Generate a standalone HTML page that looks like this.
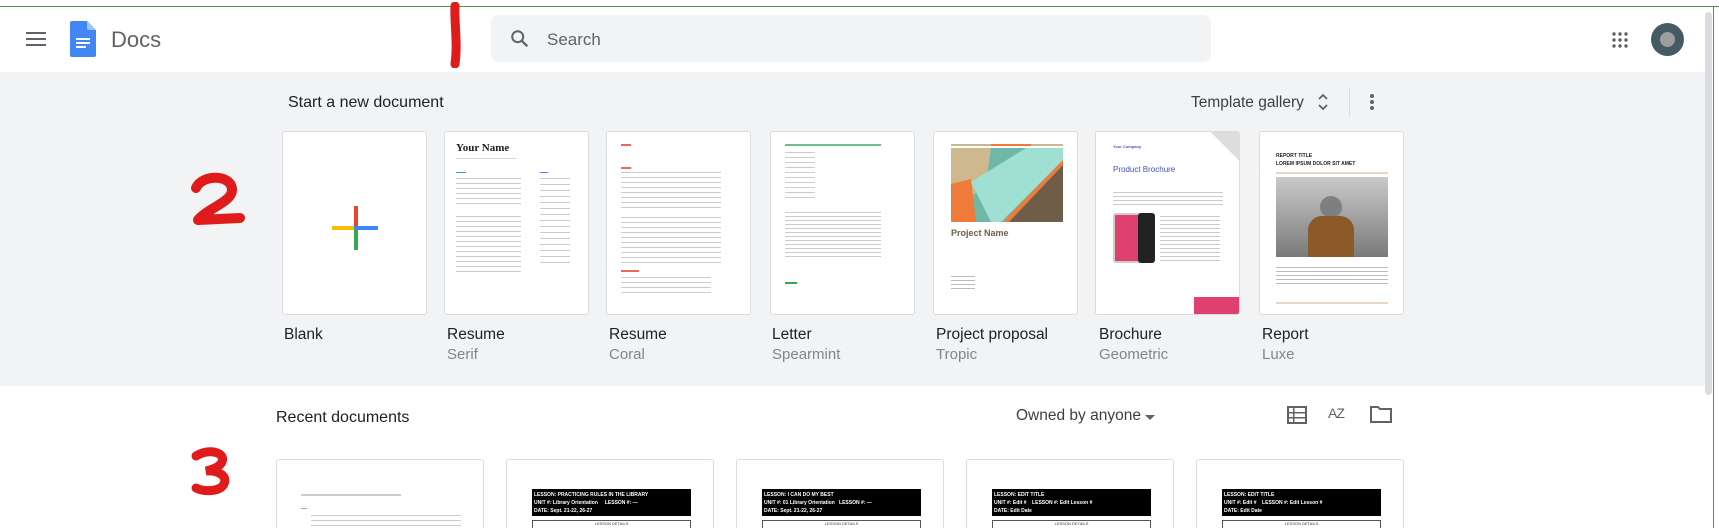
<!DOCTYPE html>
<html><head><meta charset="utf-8"><style>
*{margin:0;padding:0;box-sizing:border-box}
html,body{width:1719px;height:528px;overflow:hidden}
body{background:#fff;font-family:"Liberation Sans",Arial,sans-serif;position:relative;color:#202124}
.a{position:absolute}
.gray{left:0;top:72px;width:1705px;height:314px;background:#f1f3f4}
.card{position:absolute;top:131px;width:145px;height:184px;background:#fff;border:1px solid #dadce0;border-radius:3px;overflow:hidden}
.t{position:absolute;top:326px;font-size:15.5px;color:#202124}
.s{position:absolute;top:346px;font-size:15px;color:#80868b}
.ln{position:absolute;height:2px;background:#d5d5d5}
.rc{position:absolute;top:459px;width:208px;height:69px;background:#fff;border:1px solid #dadce0;border-bottom:none;border-radius:3px 3px 0 0;overflow:hidden}
.bb{position:absolute;left:25px;top:29px;width:159px;height:27px;background:#000;color:#fff;font-size:5px;font-weight:bold;padding:2px 2px;line-height:8px}
.tb{position:absolute;left:25px;top:60px;width:159px;height:30px;border:1px solid #555;font-size:4px;text-align:center;color:#333}
</style></head><body>
<div class="a" style="left:0;top:6px;width:1719px;height:1px;background:#5a8a5a"></div>
<div class="a" style="left:1713px;top:6px;width:1px;height:522px;background:#5a8a5a"></div>
<div class="a" style="left:0;top:72px;width:14px;height:314px;background:linear-gradient(90deg,#e4e5e6,#f1f3f4)"></div>
<!-- header -->
<div class="a" style="left:26px;top:32px;width:20px;height:2px;background:#5f6368;box-shadow:0 6px 0 #5f6368,0 12px 0 #5f6368"></div>
<svg class="a" style="left:70px;top:21px" width="26" height="36" viewBox="0 0 26 36"><path d="M2 0h15l9 9v25a2 2 0 0 1-2 2H2a2 2 0 0 1-2-2V2a2 2 0 0 1 2-2z" fill="#4285f4"/><path d="M17 0l9 9h-7a2 2 0 0 1-2-2z" fill="#a1c2fa"/><rect x="6" y="17" width="14" height="2" fill="#fff"/><rect x="6" y="21" width="14" height="2" fill="#fff"/><rect x="6" y="25" width="10" height="2" fill="#fff"/></svg>
<div class="a" style="left:111px;top:27px;font-size:22px;color:#5f6368">Docs</div>
<svg class="a" style="left:446px;top:2px" width="20" height="66"><path d="M9 4 C8 20 12 40 9 62" stroke="#e01b1b" stroke-width="9" stroke-linecap="round" fill="none"/></svg>
<div class="a" style="left:491px;top:15px;width:720px;height:47px;background:#f1f3f4;border-radius:8px"></div>
<svg class="a" style="left:509px;top:28px" width="22" height="22" viewBox="0 0 24 24"><circle cx="9.5" cy="9.5" r="6" stroke="#5f6368" stroke-width="2.2" fill="none"/><path d="M14 14l6 6" stroke="#5f6368" stroke-width="2.6"/></svg>
<div class="a" style="left:547px;top:30px;font-size:17px;color:#5f6368">Search</div>
<svg class="a" style="left:1611px;top:31px" width="18" height="18"><g fill="#5f6368"><circle cx="3" cy="3" r="1.7"/><circle cx="9" cy="3" r="1.7"/><circle cx="15" cy="3" r="1.7"/><circle cx="3" cy="9" r="1.7"/><circle cx="9" cy="9" r="1.7"/><circle cx="15" cy="9" r="1.7"/><circle cx="3" cy="15" r="1.7"/><circle cx="9" cy="15" r="1.7"/><circle cx="15" cy="15" r="1.7"/></g></svg>
<div class="a" style="left:1651px;top:23px;width:33px;height:33px;border-radius:50%;background:#455a64"></div>
<div class="a" style="left:1660px;top:32px;width:15px;height:15px;border-radius:50%;background:#9e9e9e"></div>
<!-- gray section -->
<div class="a gray"></div>
<div class="a" style="left:1705px;top:12px;width:7px;height:383px;background:#dadce0;border-radius:4px"></div>
<div class="a" style="left:288px;top:94px;font-size:16px">Start a new document</div>
<div class="a" style="left:1191px;top:94px;font-size:15.5px;color:#3c4043">Template gallery</div>
<svg class="a" style="left:1317px;top:92px" width="12" height="20"><path d="M2 7l4-4 4 4M2 13l4 4 4-4" stroke="#5f6368" stroke-width="1.8" fill="none"/></svg>
<div class="a" style="left:1349px;top:88px;width:1px;height:29px;background:#dadce0"></div>
<div class="a" style="left:1370px;top:94px;width:4px;height:4px;border-radius:50%;background:#5f6368;box-shadow:0 6px 0 #5f6368,0 12px 0 #5f6368"></div>
<svg class="a" style="left:188px;top:172px" width="60" height="56"><path d="M8 16 C14 2 44 2 44 18 C44 30 20 36 10 48 L52 46" stroke="#e01b1b" stroke-width="10" stroke-linecap="round" stroke-linejoin="round" fill="none"/></svg>
<!-- cards -->
<div class="card" style="left:282px">
 <div class="a" style="left:71px;top:74px;width:4px;height:20px;background:#ea4335"></div>
 <div class="a" style="left:49px;top:94px;width:22px;height:4px;background:#fbbc04"></div>
 <div class="a" style="left:71px;top:94px;width:24px;height:4px;background:#4285f4"></div>
 <div class="a" style="left:71px;top:98px;width:4px;height:20px;background:#34a853"></div>
</div>
<div class="card" style="left:444px">
 <div class="a" style="left:11px;top:10px;font-family:'Liberation Serif',serif;font-size:11px;font-weight:bold">Your Name</div>
 <div class="ln" style="left:11px;top:26px;width:60px;height:1px"></div>
 <div class="ln" style="left:11px;top:40px;width:10px;height:1px;background:#4285f4"></div>
 <div class="ln" style="left:95px;top:40px;width:8px;height:1px;background:#4285f4"></div>
 <div class="ln" style="left:11px;top:46px;width:65px;height:28px;background:repeating-linear-gradient(#ccc 0 1px,transparent 1px 5px)"></div>
 <div class="ln" style="left:11px;top:84px;width:65px;height:60px;background:repeating-linear-gradient(#ccc 0 1px,transparent 1px 5px)"></div>
 <div class="ln" style="left:95px;top:46px;width:30px;height:90px;background:repeating-linear-gradient(#ccc 0 1px,transparent 1px 6px)"></div>
</div>
<div class="card" style="left:606px">
 <div class="ln" style="left:14px;top:12px;width:10px;background:#ea6a5a"></div>
 <div class="ln" style="left:14px;top:35px;width:10px;background:#ea6a5a"></div>
 <div class="ln" style="left:14px;top:40px;width:100px;height:40px;background:repeating-linear-gradient(#ccc 0 1px,transparent 1px 5px)"></div>
 <div class="ln" style="left:14px;top:85px;width:100px;height:50px;background:repeating-linear-gradient(#ccc 0 1px,transparent 1px 5px)"></div>
 <div class="ln" style="left:14px;top:138px;width:18px;background:#ea6a5a"></div>
 <div class="ln" style="left:14px;top:145px;width:90px;height:20px;background:repeating-linear-gradient(#ccc 0 1px,transparent 1px 5px)"></div>
</div>
<div class="card" style="left:770px">
 <div class="ln" style="left:14px;top:12px;width:96px;background:#6dc08c"></div>
 <div class="ln" style="left:14px;top:20px;width:30px;height:50px;background:repeating-linear-gradient(#ccc 0 1px,transparent 1px 5px)"></div>
 <div class="ln" style="left:14px;top:80px;width:96px;height:45px;background:repeating-linear-gradient(#ccc 0 1px,transparent 1px 4px)"></div>
 <div class="ln" style="left:14px;top:150px;width:12px;background:#34a853"></div>
</div>
<div class="card" style="left:933px">
 <svg class="a" style="left:17px;top:12px" width="112" height="78" viewBox="0 0 112 78"><rect y="0" width="112" height="2" fill="#c9b98f"/><rect x="40" y="0" width="40" height="2" fill="#f07a3a"/><rect y="4" width="112" height="74" fill="#6fb8a8"/><polygon points="0,4 40,4 35,40 0,70" fill="#cdb98d"/><polygon points="0,40 20,35 25,78 0,78" fill="#f07a3a"/><polygon points="112,20 112,78 55,78" fill="#6e5e48"/><polygon points="20,38 75,4 112,4 112,16 50,78 40,78" fill="#9fe0d2"/><polygon points="112,16 112,21 58,78 52,78" fill="#f07a3a"/></svg>
 <div class="a" style="left:17px;top:96px;font-size:9px;font-weight:bold;color:#6e5e48">Project Name</div>
 <div class="ln" style="left:17px;top:144px;width:24px;height:14px;background:repeating-linear-gradient(#bbb 0 1px,transparent 1px 4px)"></div>
</div>
<div class="card" style="left:1095px">
 <div class="a" style="left:17px;top:12px;font-size:4px;font-weight:bold;color:#5a4fd8">Your Company</div>
 <div class="a" style="left:17px;top:33px;font-size:8px;color:#3f51b5">Product Brochure</div>
 <div class="a" style="left:110px;top:0;width:35px;height:40px;background:linear-gradient(225deg,#ddd 40%,transparent 41%)"></div>
 <div class="ln" style="left:17px;top:60px;width:110px;height:14px;background:repeating-linear-gradient(#ccc 0 1px,transparent 1px 4px)"></div>
 <div class="a" style="left:17px;top:81px;width:28px;height:50px;background:#e0406e;border:2px solid #ccc;border-radius:3px"></div>
 <div class="a" style="left:42px;top:81px;width:17px;height:50px;background:#222;border-radius:3px"></div>
 <div class="ln" style="left:64px;top:84px;width:60px;height:45px;background:repeating-linear-gradient(#ccc 0 1px,transparent 1px 4px)"></div>
 <div class="a" style="left:98px;top:165px;width:47px;height:18px;background:#e0406e"></div>
 <div class="a" style="left:0;top:182px;width:145px;height:2px;background:#3f51b5"></div>
</div>
<div class="card" style="left:1259px">
 <div class="a" style="left:16px;top:20px;font-size:5px;font-weight:bold;line-height:8px">REPORT TITLE<br>LOREM IPSUM DOLOR SIT AMET</div>
 <div class="ln" style="left:16px;top:40px;width:112px;background:#e8d8c0"></div>
 <div class="a" style="left:16px;top:45px;width:112px;height:80px;background:linear-gradient(#c9c9c9,#7a7a7a)"></div>
 <div class="a" style="left:60px;top:64px;width:22px;height:22px;border-radius:50%;background:#7f7f80"></div>
 <div class="a" style="left:48px;top:84px;width:46px;height:41px;border-radius:14px 14px 0 0;background:#8b5a28"></div>
 <div class="ln" style="left:16px;top:135px;width:112px;height:20px;background:repeating-linear-gradient(#bbb 0 1px,transparent 1px 4px)"></div>
 <div class="ln" style="left:16px;top:170px;width:112px;background:#e8d8c0"></div>
</div>
<div class="t" style="left:284px">Blank</div>
<div class="t" style="left:447px">Resume</div><div class="s" style="left:447px">Serif</div>
<div class="t" style="left:609px">Resume</div><div class="s" style="left:609px">Coral</div>
<div class="t" style="left:772px">Letter</div><div class="s" style="left:772px">Spearmint</div>
<div class="t" style="left:936px">Project proposal</div><div class="s" style="left:936px">Tropic</div>
<div class="t" style="left:1099px">Brochure</div><div class="s" style="left:1099px">Geometric</div>
<div class="t" style="left:1262px">Report</div><div class="s" style="left:1262px">Luxe</div>
<!-- recent -->
<div class="a" style="left:276px;top:409px;font-size:16px">Recent documents</div>
<svg class="a" style="left:186px;top:446px" width="50" height="50"><path d="M10 10 C22 2 40 6 36 16 C33 22 24 24 20 25 C32 24 42 30 38 38 C34 46 18 46 10 42" stroke="#e01b1b" stroke-width="9" stroke-linecap="round" fill="none"/></svg>
<div class="a" style="left:1016px;top:407px;font-size:15.5px;color:#3c4043">Owned by anyone</div>
<div class="a" style="left:1145px;top:415px;border-left:5px solid transparent;border-right:5px solid transparent;border-top:5px solid #5f6368"></div>
<svg class="a" style="left:1287px;top:406px" width="20" height="18"><g fill="#5f6368"><rect x="1" y="1" width="18" height="16" fill="none" stroke="#5f6368" stroke-width="2"/><rect x="1" y="6" width="18" height="1.5"/><rect x="1" y="11" width="18" height="1.5"/><rect x="6" y="1" width="1.5" height="16"/></g></svg>
<div class="a" style="left:1328px;top:405px;font-size:14px;color:#5f6368;letter-spacing:-1px">AZ</div>
<svg class="a" style="left:1370px;top:405px" width="22" height="18"><path d="M1 2h7l2 2h11v13H1z" fill="none" stroke="#5f6368" stroke-width="2"/></svg>
<div class="rc" style="left:276px">
 <div class="a" style="left:24px;top:34px;width:100px;height:2px;background:#ccc"></div>
 <div class="ln" style="left:24px;top:48px;width:6px;height:1px;background:#aaa"></div>
 <div class="ln" style="left:34px;top:55px;width:150px;height:25px;background:repeating-linear-gradient(#ccc 0 1px,transparent 1px 5px)"></div>
</div>
<div class="rc" style="left:506px"><div class="bb">LESSON: PRACTICING RULES IN THE LIBRARY<br>UNIT #: Library Orientation &nbsp;&nbsp;&nbsp; LESSON #: —<br>DATE: Sept. 21-22, 26-27</div><div class="tb">LESSON DETAILS</div></div>
<div class="rc" style="left:736px"><div class="bb">LESSON: I CAN DO MY BEST<br>UNIT #: 01 Library Orientation &nbsp; LESSON #: —<br>DATE: Sept. 21-22, 26-27</div><div class="tb">LESSON DETAILS</div></div>
<div class="rc" style="left:966px"><div class="bb">LESSON: EDIT TITLE<br>UNIT #: Edit # &nbsp;&nbsp; LESSON #: Edit Lesson #<br>DATE: Edit Date</div><div class="tb">LESSON DETAILS</div></div>
<div class="rc" style="left:1196px"><div class="bb">LESSON: EDIT TITLE<br>UNIT #: Edit # &nbsp;&nbsp; LESSON #: Edit Lesson #<br>DATE: Edit Date</div><div class="tb">LESSON DETAILS</div></div>
</body></html>
